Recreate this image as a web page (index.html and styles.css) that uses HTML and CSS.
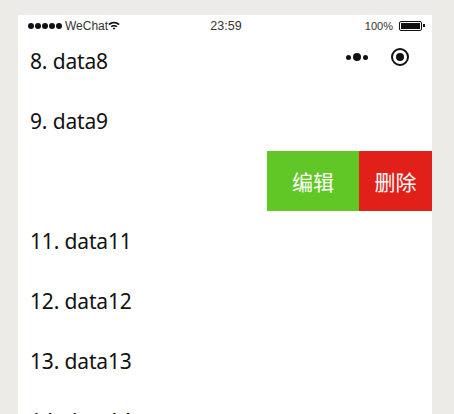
FILE: index.html
```html
<!DOCTYPE html>
<html lang="en">

<head>
  <meta charset="UTF-8">
  <meta name="viewport" content="width=device-width, initial-scale=1.0">
  <title>WeChat list</title>
  <link rel="stylesheet" href="styles.css">
</head>

<body>
  <div class="phone">
    <!-- status bar, sits over the scrolled list -->
    <div class="statusbar">
      <div class="carrier">
        <span class="dots"><i></i><i></i><i></i><i></i><i></i></span>
        <span class="wechat">WeChat</span>
        <svg class="wifi" width="12" height="9" viewBox="0 0 11 8">
          <path d="M0.3 2.6C3.2-0.1 7.8-0.1 10.7 2.6L9.6 3.7C7.3 1.6 3.7 1.6 1.4 3.7Z" fill="#111" />
          <path d="M2.3 4.5C3.9 3.1 7.1 3.1 8.7 4.5L7.6 5.6C6.4 4.6 4.6 4.6 3.4 5.6Z" fill="#111" />
          <path d="M4.3 6.5C4.9 6 6.1 6 6.7 6.5L5.5 7.8Z" fill="#111" />
        </svg>
      </div>
      <div class="time">23:59</div>
      <div class="battery">
        <span>100%</span>
        <span class="cell"><i></i></span>
        <span class="nub"></span>
      </div>
    </div>

    <!-- capsule buttons -->
    <div class="capsule">
      <span class="more"><i></i><i class="big"></i><i></i></span>
      <span class="target"><i></i></span>
    </div>

    <ul class="list">
      <li class="row">8. data8</li>
      <li class="row">9. data9</li>
      <li class="row swiped">
        <button class="edit">编辑</button>
        <button class="del">删除</button>
      </li>
      <li class="row">11. data11</li>
      <li class="row">12. data12</li>
      <li class="row">13. data13</li>
      <li class="row">14. data14</li>
    </ul>
  </div>
</body>

</html>
```

FILE: styles.css
```css
* {
  margin: 0;
  padding: 0;
  box-sizing: border-box;
}

html,
body {
  height: 414px;
  overflow: hidden;
}

body {
  background-color: #ecebe7;
  font-family: "Noto Sans", "Noto Sans CJK SC", sans-serif;
  padding: 15px 22px 0 18px;
}

li {
  list-style: none;
}

.phone {
  position: relative;
  width: 414px;
  height: 399px;
  background-color: white;
  overflow: hidden;
}

/* status bar */
.statusbar {
  position: absolute;
  top: 0;
  left: 0;
  width: 100%;
  height: 21px;
  padding: 0 7px 0 10px;
  display: flex;
  align-items: center;
  justify-content: space-between;
  font-family: "Liberation Sans", sans-serif;
  font-size: 12px;
  color: #333;
}

.carrier {
  display: flex;
  align-items: center;
  width: 165px;
}

.dots {
  display: flex;
  gap: 1px;
  margin-right: 3px;
}

.dots i {
  width: 6px;
  height: 6px;
  border-radius: 50%;
  background-color: #111;
}

.time {
  font-size: 12.5px;
  margin-right: 1px;
}

.battery {
  display: flex;
  align-items: center;
  justify-content: flex-end;
  width: 165px;
  font-size: 11px;
}

.cell {
  display: block;
  width: 23px;
  height: 10px;
  margin-left: 6px;
  margin-right: 1px;
  padding: 1px;
  border: 1px solid #111;
  border-radius: 2px;
}

.cell i {
  display: block;
  height: 100%;
  background-color: #111;
}

.nub {
  width: 2px;
  height: 3px;
  background-color: #111;
}

/* capsule */
.capsule {
  position: absolute;
  top: 33px;
  right: 23px;
  display: flex;
  align-items: center;
  gap: 23px;
}

.more {
  display: flex;
  align-items: center;
  gap: 2px;
}

.more i {
  width: 5px;
  height: 5px;
  border-radius: 50%;
  background-color: #111;
}

.more i.big {
  width: 8px;
  height: 8px;
}

.target {
  display: flex;
  align-items: center;
  justify-content: center;
  width: 18px;
  height: 18px;
  border: 2px solid #111;
  border-radius: 50%;
}

.target i {
  width: 8px;
  height: 8px;
  border-radius: 50%;
  background-color: #111;
}

/* list */
.list {
  padding-top: 16px;
}

.row {
  height: 60px;
  padding-left: 12px;
  font-size: 21px;
  letter-spacing: -0.15px;
  line-height: 60px;
  color: #111;
}

.swiped {
  display: flex;
  justify-content: flex-end;
  padding-left: 0;
}

.swiped button {
  height: 60px;
  border: none;
  color: white;
  font-family: "Noto Sans CJK SC", sans-serif;
  font-size: 21px;
}

.edit {
  width: 92px;
  background-color: #60c726;
}

.del {
  width: 73px;
  background-color: #e2201a;
}
```
